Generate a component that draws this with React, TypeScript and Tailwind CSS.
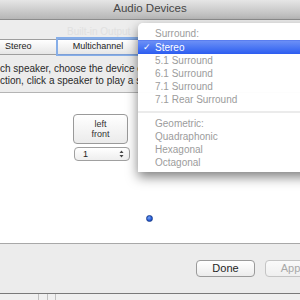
import React from "react";

const items = [
  { t: "Surround:", kind: "header" },
  { t: "Stereo", kind: "selected" },
  { t: "5.1 Surround", kind: "item" },
  { t: "6.1 Surround", kind: "item" },
  { t: "7.1 Surround", kind: "item" },
  { t: "7.1 Rear Surround", kind: "item" },
  { t: "sep", kind: "sep" },
  { t: "Geometric:", kind: "header" },
  { t: "Quadraphonic", kind: "item" },
  { t: "Hexagonal", kind: "item" },
  { t: "Octagonal", kind: "item" },
];

export default function App() {
  return (
    <div className="relative w-[300px] h-[300px] overflow-hidden bg-white font-['Liberation_Sans',Arial,sans-serif] flex flex-col">
      {/* title bar */}
      <div className="h-[20px] shrink-0 bg-gradient-to-b from-[#e6e6e6] to-[#b6b6b6] border-b border-[#8c8c8c] flex items-center justify-center">
        <span className="text-[11.5px] text-[#464646] leading-none -mt-[2px]">Audio Devices</span>
      </div>
      {/* toolbar strip */}
      <div className="h-[17px] shrink-0 bg-[#ededed] flex items-end pl-[67px]">
        <span className="text-[10px] leading-none text-[#e0e0e0] mb-[0px]">Built-in Output</span>
      </div>
      {/* segmented */}
      <div className="h-[19px] shrink-0 bg-[#ededed] flex items-center">
        <div className="h-[16px] w-[58px] border-y border-r border-[#9e9e9e] bg-gradient-to-b from-white to-[#e6e6e6] flex items-center pl-[5px]">
          <span className="text-[9px] text-[#222] leading-none">Stereo</span>
        </div>
        <div className="h-[16px] w-[80px] border-y border-[#7d9fd6] bg-gradient-to-b from-white to-[#e6e6e6] flex items-center justify-center shadow-[0_0_0_2px_#86aee8]">
          <span className="text-[9px] text-[#222] leading-none">Multichannel</span>
        </div>
      </div>
      {/* description */}
      <div className="h-[37px] shrink-0 bg-[#ececec] border-b border-[#b4b4b4] pt-[7px]">
        <div className="w-[138px] whitespace-nowrap overflow-hidden">
          <div className="text-[10px] leading-[12px] text-[#2a2a2a]">ch speaker, choose the device cha</div>
          <div className="text-[10px] leading-[12px] text-[#2a2a2a]">ction, click a speaker to play a sou</div>
        </div>
      </div>
      {/* content */}
      <div className="h-[150px] shrink-0 bg-white flex flex-col pl-[73px] pt-[21px]">
        <div className="w-[55px] h-[30px] rounded-[4px] border border-[#9a9a9a] bg-gradient-to-b from-white to-[#ebebeb] flex flex-col items-center justify-center">
          <span className="text-[9px] leading-[10px] text-[#333]">left</span>
          <span className="text-[9px] leading-[10px] text-[#333]">front</span>
        </div>
        <div className="mt-[3px] ml-[1px] w-[56px] h-[14px] rounded-[4px] border border-[#a0a0a0] bg-gradient-to-b from-white to-[#eeeeee] flex items-center justify-between pl-[8px] pr-[5px]">
          <span className="text-[9px] leading-none text-[#222]">1</span>
          <svg width="5" height="8" viewBox="0 0 5 8">
            <path d="M2.5 0.5 L4.5 3 L0.5 3 Z" fill="#444" />
            <path d="M2.5 7.5 L4.5 5 L0.5 5 Z" fill="#444" />
          </svg>
        </div>
        <div className="mt-[54px] ml-[73px] w-[7px] h-[7px] rounded-full bg-[radial-gradient(circle_at_40%_35%,#7aa6f5,#2158d6_60%,#1a3f9a)] border border-[#1b3f8f]" />
      </div>
      {/* bottom bar */}
      <div className="h-[51px] shrink-0 bg-[#ececec] border-t border-[#a8a8a8] border-b border-b-[#7a7a7a] flex items-start pt-[16px] pl-[196px] gap-[10px]">
        <div className="w-[59px] h-[17px] shrink-0 rounded-[4px] border border-[#9a9a9a] bg-gradient-to-b from-white to-[#ececec] flex items-center justify-center">
          <span className="text-[11px] leading-none text-[#1e1e1e]">Done</span>
        </div>
        <div className="w-[59px] h-[17px] shrink-0 rounded-[4px] border border-[#c4c4c4] bg-gradient-to-b from-[#fafafa] to-[#efefef] flex items-center justify-center">
          <span className="text-[11px] leading-none text-[#a8a8a8]">Apply</span>
        </div>
      </div>
      {/* bottom strip */}
      <div className="flex-1 bg-[#f0f0f0] flex pl-[38px] gap-[8px]">
        <div className="w-[1px] bg-[#c0c0c0]" />
        <div className="w-[1px] bg-[#c0c0c0]" />
        <div className="w-[1px] bg-[#c0c0c0] ml-[-1px]" />
      </div>

      {/* popup menu */}
      <div className="absolute left-[138px] top-[23px] w-[175px] h-[149px] bg-[rgba(255,255,255,0.97)] rounded-tl-[5px] shadow-[0_5px_12px_rgba(0,0,0,0.5)] pt-[4px] flex flex-col">
        {items.map((it, i) => {
          if (it.kind === "sep")
            return (
              <div key={i} className="h-[11px] flex items-center">
                <div className="w-full h-[2px] bg-[#ebebeb]" />
              </div>
            );
          if (it.kind === "selected")
            return (
              <div key={i} className="h-[14px] bg-gradient-to-b from-[#6b8ff6] to-[#2c5cf0] border-t border-[#5a7ef0] flex items-center text-white text-[10px] leading-none">
                <span className="w-[17px] pl-[5px] text-[9px]">✓</span>
                <span>{it.t}</span>
              </div>
            );
          return (
            <div key={i} className="h-[13px] flex items-center pl-[17px] text-[10px] leading-none text-[#9c9c9c]">
              {it.t}
            </div>
          );
        })}
      </div>
    </div>
  );
}
